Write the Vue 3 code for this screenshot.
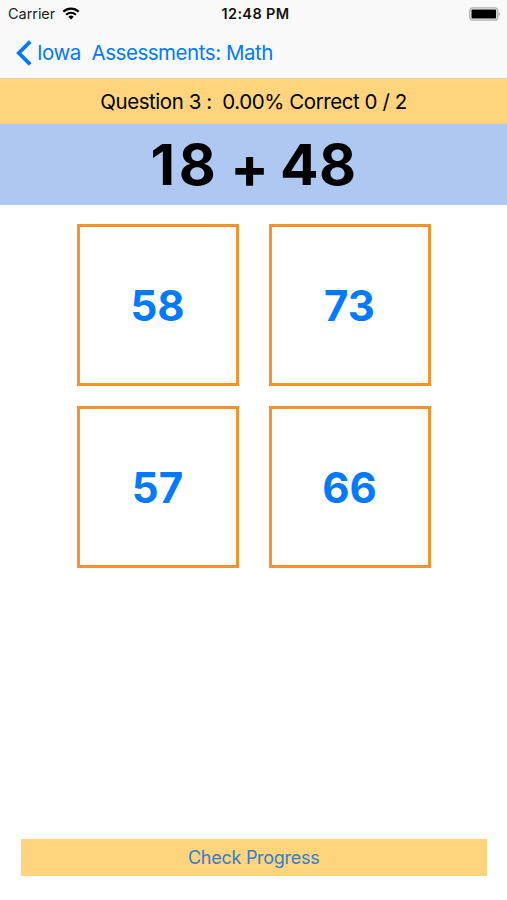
<script setup>
import { ref, computed } from 'vue'

const left = ref(18)
const right = ref(48)
const answers = ref([58, 73, 57, 66])
const number = ref(3)
const correct = ref(0)
const total = ref(2)

const percent = computed(() => (correct.value / total.value * 100).toFixed(2))
</script>

<template>
  <div class="screen">
    <header class="top">
      <div class="status-bar">
        <div class="carrier">
          <span class="carrier-name">Carrier</span>
          <svg class="wifi" width="18" height="13" viewBox="0 0 18 13">
            <path d="M1.3 4.7a11 11 0 0 1 15.4 0" />
            <path d="M4.1 7.7a7.1 7.1 0 0 1 9.8 0" />
            <path class="wifi-dot" d="M9 12.4L6.3 9.7a3.9 3.9 0 0 1 5.4 0z" />
          </svg>
        </div>
        <span class="time">12:48 PM</span>
        <div class="battery-wrap">
          <svg class="battery" width="32" height="14" viewBox="0 0 32 14">
            <rect x="0.8" y="0.8" width="27.9" height="12.4" rx="3" fill="#f4f4f4" stroke="#adadad" stroke-width="1.3" />
            <rect x="2.5" y="2.4" width="24.6" height="9.2" rx="1" fill="#000" />
            <path d="M29.9 5v4q1.3-.6 1.3-2t-1.3-2z" fill="#adadad" />
          </svg>
        </div>
      </div>
      <nav class="nav-bar">
        <button class="back">
          <svg class="chevron" width="16" height="26" viewBox="0 0 16 26">
            <path d="M14.2 1.6L2.8 13l11.4 11.4" />
          </svg>
          <span class="back-label">Iowa&nbsp; Assessments: Math</span>
        </button>
      </nav>
    </header>

    <div class="score"><span class="score-text">Question {{ number }} :&nbsp; {{ percent }}% Correct {{ correct }} / {{ total }}</span></div>
    <div class="question">
      <span class="question-text"><span class="left">{{ left }}</span> <span class="operator">+</span> {{ right }}</span>
    </div>

    <div class="answers">
      <button v-for="answer in answers" :key="answer" class="answer">{{ answer }}</button>
    </div>

    <button class="progress"><span class="progress-text">Check Progress</span></button>
  </div>
</template>

<style>
body {
  margin: 0;
  background: #fff;
}
</style>

<style scoped>
.screen {
  display: flex;
  flex-direction: column;
  box-sizing: border-box;
  height: 900px;
  padding-bottom: 24.5px;
  background: #fff;
  font-family: Inter, "Liberation Sans", sans-serif;
  color: #000;
}
button {
  padding: 0;
  border: none;
  background: none;
  font: inherit;
  color: #007aff;
  cursor: pointer;
}
.top {
  box-sizing: border-box;
  height: 79px;
  background: #f9f9f9;
  border-bottom: 1px solid #d9d0c0;
}
.status-bar {
  display: grid;
  grid-template-columns: 1fr auto 1fr;
  align-items: center;
  height: 27px;
  padding: 0 6px 0 8px;
}
.carrier {
  display: flex;
  align-items: center;
  gap: 7px;
  font-size: 14.5px;
  letter-spacing: -0.05px;
  color: #222;
}
.wifi {
  fill: none;
  stroke: #000;
  stroke-width: 2.2;
}
.wifi .wifi-dot {
  fill: #000;
  stroke: none;
}
.time {
  padding-left: 2px;
  font-size: 14.5px;
  font-weight: 600;
  letter-spacing: 0.35px;
  color: #111;
}
.battery-wrap {
  display: flex;
  justify-content: flex-end;
}
.nav-bar {
  display: flex;
  align-items: center;
  height: 51px;
  padding-left: 16px;
}
.back {
  display: flex;
  align-items: center;
  gap: 5px;
  font-size: 20.5px;
  letter-spacing: -0.46px;
  white-space: nowrap;
}
.chevron {
  fill: none;
  stroke: #007aff;
  stroke-width: 3.8;
}
.score {
  display: flex;
  align-items: center;
  justify-content: center;
  height: 45px;
  background: #ffd47c;
  font-size: 20.5px;
  letter-spacing: -0.44px;
  white-space: nowrap;
}
.question {
  display: flex;
  align-items: center;
  justify-content: center;
  height: 81px;
  background: #afc8f1;
  font-size: 57px;
  font-weight: 700;
  letter-spacing: 0.4px;
  word-spacing: -3.2px;
  font-feature-settings: "calt" 0;
}
.left {
  letter-spacing: 3.6px;
}
.operator {
  line-height: 0;
  vertical-align: -3px;
}
.answers {
  display: grid;
  grid-template-columns: repeat(2, 162px);
  grid-auto-rows: 162px;
  gap: 20px 30px;
  justify-content: center;
  padding-top: 19px;
}
.answer {
  border: 3px solid #f8912a;
  font-size: 42px;
  font-weight: 700;
}
.progress {
  height: 36.5px;
  margin: auto 20px 0 20.5px;
  background: #ffd47c;
  font-size: 18px;
  letter-spacing: -0.27px;
  color: #2f80cd;
}
</style>
